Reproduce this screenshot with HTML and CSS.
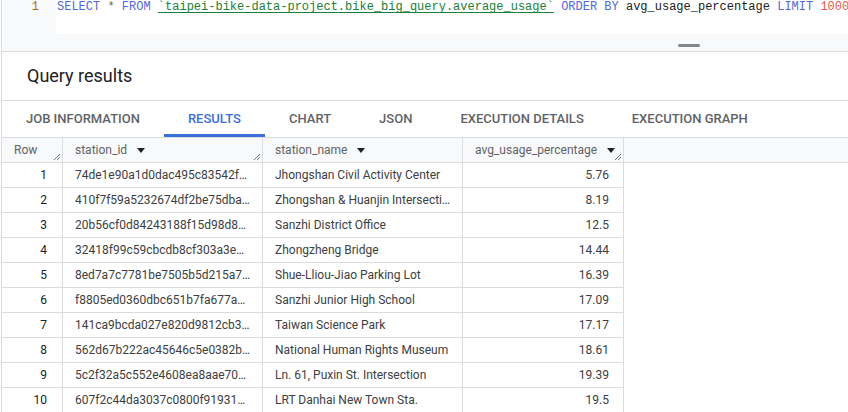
FILE: index.html
```html
<!DOCTYPE html>
<html>
<head>
<meta charset="utf-8">
<link rel="stylesheet" href="styles.css">
</head>
<body>
<div class="app">
  <div class="editor">
    <div class="code-row">
      <div class="gutter"><span class="ln">1</span></div>
      <div class="code"><span class="kw">SELECT</span> <span class="op">*</span> <span class="kw">FROM</span> <span class="str">`taipei-bike-data-project.bike_big_query.average_usage`</span> <span class="kw">ORDER</span> <span class="kw">BY</span> <span class="id">avg_usage_percentage</span> <span class="kw">LIMIT</span> <span class="num">1000</span></div>
    </div>
    <div class="resize-band"><span class="handle"></span></div>
  </div>

  <div class="results-title">Query results</div>

  <div class="tabs">
    <div class="tab">JOB INFORMATION</div>
    <div class="tab active">RESULTS</div>
    <div class="tab">CHART</div>
    <div class="tab">JSON</div>
    <div class="tab">EXECUTION DETAILS</div>
    <div class="tab">EXECUTION GRAPH</div>
  </div>

  <div class="grid">
    <div class="hrow">
      <div class="hcell c-row">Row<svg class="grip" width="8" height="8" viewBox="0 0 8 8"><path d="M7 1L1 7M7 4L4 7" stroke="#5f6368" stroke-width="0.9"/></svg></div>
      <div class="hcell">station_id<span class="caret"></span><svg class="grip" width="8" height="8" viewBox="0 0 8 8"><path d="M7 1L1 7M7 4L4 7" stroke="#5f6368" stroke-width="0.9"/></svg></div>
      <div class="hcell">station_name<span class="caret"></span></div>
      <div class="hcell">avg_usage_percentage<span class="caret"></span><svg class="grip" width="8" height="8" viewBox="0 0 8 8"><path d="M7 1L1 7M7 4L4 7" stroke="#5f6368" stroke-width="0.9"/></svg></div>
      <div class="hcell filler"></div>
    </div>
    <div class="brow"><div class="cell c-row">1</div><div class="cell">74de1e90a1d0dac495c83542f…</div><div class="cell">Jhongshan Civil Activity Center</div><div class="cell num-cell">5.76</div></div>
    <div class="brow"><div class="cell c-row">2</div><div class="cell">410f7f59a5232674df2be75dba…</div><div class="cell">Zhongshan &amp; Huanjin Intersecti…</div><div class="cell num-cell">8.19</div></div>
    <div class="brow"><div class="cell c-row">3</div><div class="cell">20b56cf0d84243188f15d98d8…</div><div class="cell">Sanzhi District Office</div><div class="cell num-cell">12.5</div></div>
    <div class="brow"><div class="cell c-row">4</div><div class="cell">32418f99c59cbcdb8cf303a3e…</div><div class="cell">Zhongzheng Bridge</div><div class="cell num-cell">14.44</div></div>
    <div class="brow"><div class="cell c-row">5</div><div class="cell">8ed7a7c7781be7505b5d215a7…</div><div class="cell">Shue-Lliou-Jiao Parking Lot</div><div class="cell num-cell">16.39</div></div>
    <div class="brow"><div class="cell c-row">6</div><div class="cell">f8805ed0360dbc651b7fa677a…</div><div class="cell">Sanzhi Junior High School</div><div class="cell num-cell">17.09</div></div>
    <div class="brow"><div class="cell c-row">7</div><div class="cell">141ca9bcda027e820d9812cb3…</div><div class="cell">Taiwan Science Park</div><div class="cell num-cell">17.17</div></div>
    <div class="brow"><div class="cell c-row">8</div><div class="cell">562d67b222ac45646c5e0382b…</div><div class="cell">National Human Rights Museum</div><div class="cell num-cell">18.61</div></div>
    <div class="brow"><div class="cell c-row">9</div><div class="cell">5c2f32a5c552e4608ea8aae70…</div><div class="cell">Ln. 61, Puxin St. Intersection</div><div class="cell num-cell">19.39</div></div>
    <div class="brow"><div class="cell c-row">10</div><div class="cell">607f2c44da3037c0800f91931…</div><div class="cell">LRT Danhai New Town Sta.</div><div class="cell num-cell">19.5</div></div>
  </div>
</div>
</body>
</html>
```

FILE: styles.css
```css
* { box-sizing: border-box; }
html, body { margin: 0; padding: 0; background: #fff; overflow: hidden; }
body { font-family: Roboto, "Liberation Sans", sans-serif; color: #202124; }

.app {
  margin-left: 1px;
  border-left: 1px solid #dadce0;
  height: 412px;
  overflow: hidden;
}

/* Editor */
.editor { background: #f8f9fa; border-bottom: 1px solid #dadce0; }
.code-row { display: flex; height: 34px; }
.gutter { width: 54px; background: #f8f9fa; display: flex; justify-content: flex-end; padding-right: 17px; }
.ln { font-family: "Liberation Mono", "DejaVu Sans Mono", monospace; font-size: 12px; line-height: 14px; color: #b06a00; }
.code {
  flex: 1; background: #fff; white-space: nowrap; overflow: hidden;
  font-family: "Liberation Mono", "DejaVu Sans Mono", monospace; font-size: 12px; line-height: 14px;
  color: #202124; padding-left: 1px;
}
.kw { color: #5567dc; }
.op { color: #5f6368; }
.str { color: #188038; text-decoration: underline; text-decoration-color: #188038; text-underline-offset: 2px; }
.id { color: #202124; }
.num { color: #e8594f; }
.resize-band { height: 17px; display: flex; justify-content: flex-end; align-items: flex-start; padding-right: 148px; }
.handle { width: 22px; height: 3px; margin-top: 10px; border-radius: 2px; background: #80868b; }

/* Title */
.results-title {
  height: 49px; border-bottom: 1px solid #dadce0;
  font-size: 18px; line-height: 48px; padding-left: 25px; color: #202124;
}

/* Tabs */
.tabs { display: flex; height: 37px; border-bottom: 1px solid #dadce0; }
.tab {
  padding: 0 24px; height: 36px; line-height: 36px;
  font-size: 13px; font-weight: 500; letter-spacing: 0; color: #5f6368;
  border-bottom: 3px solid transparent;
}
.tab.active { color: #3b6fd9; border-bottom-color: #3b6fd9; line-height: 30px; padding-top: 3px; }

/* Grid */
.grid { font-size: 12px; }
.hrow, .brow { display: grid; grid-template-columns: 61px 200px 200px 161px 1fr; }
.hrow { height: 25px; background: #f8f9fa; border-bottom: 1px solid #dadce0; }
.hcell {
  position: relative; border-right: 1px solid #dadce0; padding-left: 12px;
  line-height: 24px; color: #5f6368; display: flex; align-items: center;
}
.hcell.filler { border-right: none; }
.caret {
  display: inline-block; width: 0; height: 0; margin-left: 10px;
  border-left: 4px solid transparent; border-right: 4px solid transparent; border-top: 5px solid #202124;
}
.grip { position: absolute; right: 1px; bottom: 1px; }
.brow { height: 25px; grid-template-columns: 61px 200px 200px 161px; }
.cell {
  border-right: 1px solid #dadce0; border-bottom: 1px solid #dadce0;
  line-height: 24px; padding: 0 12px; white-space: nowrap; overflow: hidden; color: #3c4043;
}
.cell.c-row { text-align: right; padding-right: 15px; color: #202124; }
.num-cell { text-align: right; padding-right: 14px; }
```
